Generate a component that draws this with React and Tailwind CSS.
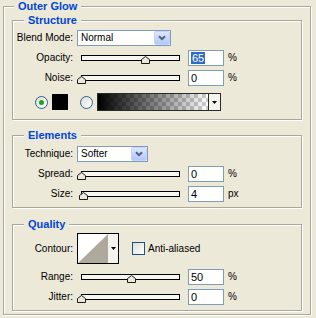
import React from 'react';

function GroupBox({ title, titleLeft, className = '', children }) {
  return (
    <div className={`relative border border-[#ACA899] shadow-[inset_1px_1px_0_#fff,1px_1px_0_#fff] ${className}`}>
      <div className={`absolute -top-[7px] ${titleLeft} bg-[#ECE9D8] px-[4px] text-[11px] font-bold leading-[13px] text-[#0046D5]`}>
        {title}
      </div>
      {children}
    </div>
  );
}

function Row({ label, className = '', children }) {
  return (
    <div className={`flex items-center ${className}`}>
      <div className="w-[60px] shrink-0 text-right">{label}</div>
      <div className="ml-[4px] flex items-center">{children}</div>
    </div>
  );
}

function Chevron() {
  return (
    <svg width="8" height="6" viewBox="0 0 8 6">
      <path d="M1 1.2L4 4.2L7 1.2" fill="none" stroke="#4D6185" strokeWidth="2" />
    </svg>
  );
}

function Select({ value, width }) {
  return (
    <div className={`flex h-[16px] items-stretch border border-[#7F9DB9] bg-white ${width}`}>
      <span className="flex-1 pl-[3px] leading-[14px]">{value}</span>
      <div className="flex w-[16px] items-center justify-center rounded-[2px] border border-[#C3D3FD] bg-linear-to-b from-[#DCE6FD] to-[#B4C8F6]">
        <Chevron />
      </div>
    </div>
  );
}

function Thumb() {
  return (
    <svg width="9" height="8" viewBox="0 0 9 8">
      <path d="M0.5 7.5V3.5L4.5 0.5L8.5 3.5V7.5Z" fill="#ECE9D8" stroke="#1A1A1A" />
    </svg>
  );
}

function Slider({ pct }) {
  return (
    <div className="relative h-[16px] w-[107px]">
      <div className="mx-[4px] mt-[5px] h-[6px] border border-black bg-[#F6F5EF]" />
      <div className="absolute top-[6px] flex" style={{ left: `${pct * 0.99}px` }}>
        <Thumb />
      </div>
    </div>
  );
}

function NumField({ value, unit, selected }) {
  return (
    <div className="ml-[4px] flex items-center">
      <div className="flex h-[16px] w-[36px] items-center border border-[#7F9DB9] bg-white pl-[2px] text-[11px]">
        <span className={selected ? 'bg-[#316AC5] px-[1px] text-white' : ''}>{value}</span>
      </div>
      <span className="ml-[4px]">{unit}</span>
    </div>
  );
}

function SliderRow({ label, pct, value, unit, selected, className }) {
  return (
    <Row label={label} className={`h-[16px] ${className}`}>
      <Slider pct={pct} />
      <NumField value={value} unit={unit} selected={selected} />
    </Row>
  );
}

function Radio({ checked }) {
  return (
    <div className="flex h-[13px] w-[13px] items-center justify-center rounded-full border border-[#2C628B] bg-linear-to-br from-[#DCDCD7] to-white">
      {checked && <div className="h-[5px] w-[5px] rounded-full bg-[#21A121]" />}
    </div>
  );
}

function DownTriangle() {
  return (
    <svg width="5" height="3" viewBox="0 0 5 3">
      <path d="M0 0H5L2.5 3Z" fill="#000" />
    </svg>
  );
}

function GradientPicker() {
  return (
    <div className="flex h-[18px] w-[124px] border border-[#2A2A2A]">
      <svg width="110" height="16" viewBox="0 0 110 16">
        <defs>
          <pattern id="chk" width="8" height="8" patternUnits="userSpaceOnUse">
            <rect width="8" height="8" fill="#fff" />
            <rect width="4" height="4" fill="#CDCDCD" />
            <rect x="4" y="4" width="4" height="4" fill="#CDCDCD" />
          </pattern>
          <linearGradient id="fade" x1="0" x2="1" y1="0" y2="0">
            <stop offset="0" stopColor="#000" />
            <stop offset="1" stopColor="#000" stopOpacity="0" />
          </linearGradient>
        </defs>
        <rect width="110" height="16" fill="url(#chk)" />
        <rect width="110" height="16" fill="url(#fade)" />
      </svg>
      <div className="flex w-[12px] items-center justify-center border-l border-[#2A2A2A] bg-[#F4F3EE]">
        <DownTriangle />
      </div>
    </div>
  );
}

function Contour() {
  return (
    <div className="flex h-[31px] w-[42px] border border-black bg-[#F4F3EE]">
      <svg width="30" height="29" viewBox="0 0 30 29">
        <rect width="30" height="29" fill="#fff" />
        <path d="M0 29L30 0V29Z" fill="#ADA99B" />
      </svg>
      <div className="flex flex-1 items-center justify-center">
        <DownTriangle />
      </div>
    </div>
  );
}

function Checkbox() {
  return <div className="h-[13px] w-[13px] border border-[#1C5180] bg-linear-to-br from-[#DCDCD7] to-white" />;
}

export default function App() {
  return (
    <div className="h-[318px] w-[316px] overflow-hidden bg-[#ECE9D8] pl-[3px] pt-[6px] font-['Liberation_Sans',Arial,sans-serif] text-[10px] leading-[12px] text-black">
      <GroupBox title="Outer Glow" titleLeft="left-[10px]" className="w-[308px] px-[8px] pb-[3px] pt-[13px]">
        {/* Structure */}
        <GroupBox title="Structure" titleLeft="left-[11px]" className="pb-[8px] pt-[9px]">
          <Row label="Blend Mode:" className="h-[16px]">
            <Select value="Normal" width="w-[94px]" />
          </Row>
          <SliderRow label="Opacity:" pct={65} value="65" unit="%" selected className="mt-[4px]" />
          <SliderRow label="Noise:" pct={0} value="0" unit="%" className="mt-[4px]" />
          <div className="mt-[7px] flex h-[18px] items-center pl-[22px]">
            <Radio checked />
            <div className="ml-[4px] h-[16px] w-[16px] bg-black" />
            <div className="ml-[12px]">
              <Radio />
            </div>
            <div className="ml-[4px]">
              <GradientPicker />
            </div>
          </div>
        </GroupBox>

        {/* Elements */}
        <GroupBox title="Elements" titleLeft="left-[11px]" className="mt-[15px] pb-[5px] pt-[10px]">
          <Row label="Technique:" className="h-[16px]">
            <Select value="Softer" width="w-[71px]" />
          </Row>
          <SliderRow label="Spread:" pct={0} value="0" unit="%" className="mt-[4px]" />
          <SliderRow label="Size:" pct={1.6} value="4" unit="px" className="mt-[4px]" />
        </GroupBox>

        {/* Quality */}
        <GroupBox title="Quality" titleLeft="left-[11px]" className="mt-[16px] pb-[5px] pt-[8px]">
          <Row label="Contour:" className="h-[31px]">
            <Contour />
            <div className="ml-[13px] flex items-center">
              <Checkbox />
              <span className="ml-[3px]">Anti-aliased</span>
            </div>
          </Row>
          <SliderRow label="Range:" pct={50} value="50" unit="%" className="mt-[5px]" />
          <SliderRow label="Jitter:" pct={0} value="0" unit="%" className="mt-[4px]" />
        </GroupBox>
      </GroupBox>
    </div>
  );
}
